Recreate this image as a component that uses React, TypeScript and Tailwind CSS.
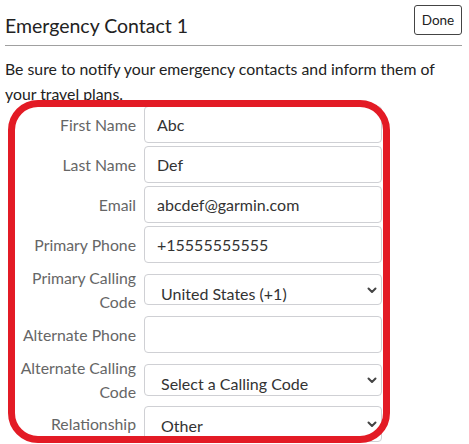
import React from 'react';

const font = { fontFamily: 'Lato, "Open Sans", sans-serif' };

function Chevron() {
  return (
    <svg
      className="pointer-events-none absolute right-[5px] top-1/2 -mt-[3px] h-[7px] w-[10px]"
      viewBox="0 0 10 7"
      fill="none"
    >
      <path d="M1.5 1.5 5 5l3.5-3.5" stroke="#444" strokeWidth="2" strokeLinecap="round" strokeLinejoin="round" />
    </svg>
  );
}

function InputRow({ label, value }: { label: string; value: string }) {
  return (
    <div className="flex items-center mb-[3px]">
      <label className="w-[131px] text-right text-[15.8px] leading-[24px] text-[#666]">{label}</label>
      <input
        readOnly
        value={value}
        className="ml-[8px] h-[37px] w-[238px] rounded-[4px] border border-[#cfd0d4] bg-white px-[12px] text-[16px] text-[#333] outline-none"
        style={font}
      />
    </div>
  );
}

function SelectRow({ label, value, selHeight }: { label: React.ReactNode; value: string; selHeight: string }) {
  return (
    <div className="flex items-start mb-[2px]">
      <label className="w-[131px] text-right text-[15.8px] leading-[24px] text-[#666]">{label}</label>
      <div className="relative ml-[8px] mt-[8px] w-[238px]">
        <div
          className={`overflow-hidden rounded-[4px] border border-[#cfd0d4] bg-white pl-[16px] pt-[8px] text-[16px] leading-[22px] text-[#333] ${selHeight}`}
        >
          {value}
        </div>
        <Chevron />
      </div>
    </div>
  );
}

export default function App() {
  return (
    <div className="relative h-[444px] w-[469px] overflow-hidden bg-white pl-[5px] pr-[7px]" style={font}>
      <div className="flex items-start justify-between border-b border-[#a0a0a0] pb-[8px] pt-[5px]">
        <h2 className="mt-[10px] text-[19.5px] leading-[22px] text-[#222]">Emergency Contact 1</h2>
        <button className="h-[30px] w-[48px] rounded-[3px] border border-[#444] bg-white text-[13.5px] text-[#222]">
          Done
        </button>
      </div>
      <p className="mt-[10px] text-[15.8px] leading-[25px] text-[#222]">
        Be sure to notify your emergency contacts and inform them of your travel plans.
      </p>

      <div>
        <InputRow label="First Name" value="Abc" />
        <InputRow label="Last Name" value="Def" />
        <InputRow label="Email" value="abcdef@garmin.com" />
        <InputRow label="Primary Phone" value="+15555555555" />
        <SelectRow label={<>Primary Calling<br />Code</>} value="United States (+1)" selHeight="h-[31px]" />
        <InputRow label="Alternate Phone" value="" />
        <SelectRow label={<>Alternate Calling<br />Code</>} value="Select a Calling Code" selHeight="h-[32px]" />
        <div className="flex items-center">
          <label className="w-[131px] text-right text-[15.8px] leading-[24px] text-[#666]">Relationship</label>
          <div className="relative ml-[8px] w-[238px]">
            <div className="h-[36px] overflow-hidden rounded-[4px] border border-[#cfd0d4] bg-white pl-[16px] pt-[8px] text-[16px] leading-[22px] text-[#333]">
              Other
            </div>
            <Chevron />
          </div>
        </div>
      </div>

      <div className="pointer-events-none absolute left-[8px] top-[100px] h-[343px] w-[382px] rounded-[30px] border-[7px] border-[#e31b25]" />
    </div>
  );
}
